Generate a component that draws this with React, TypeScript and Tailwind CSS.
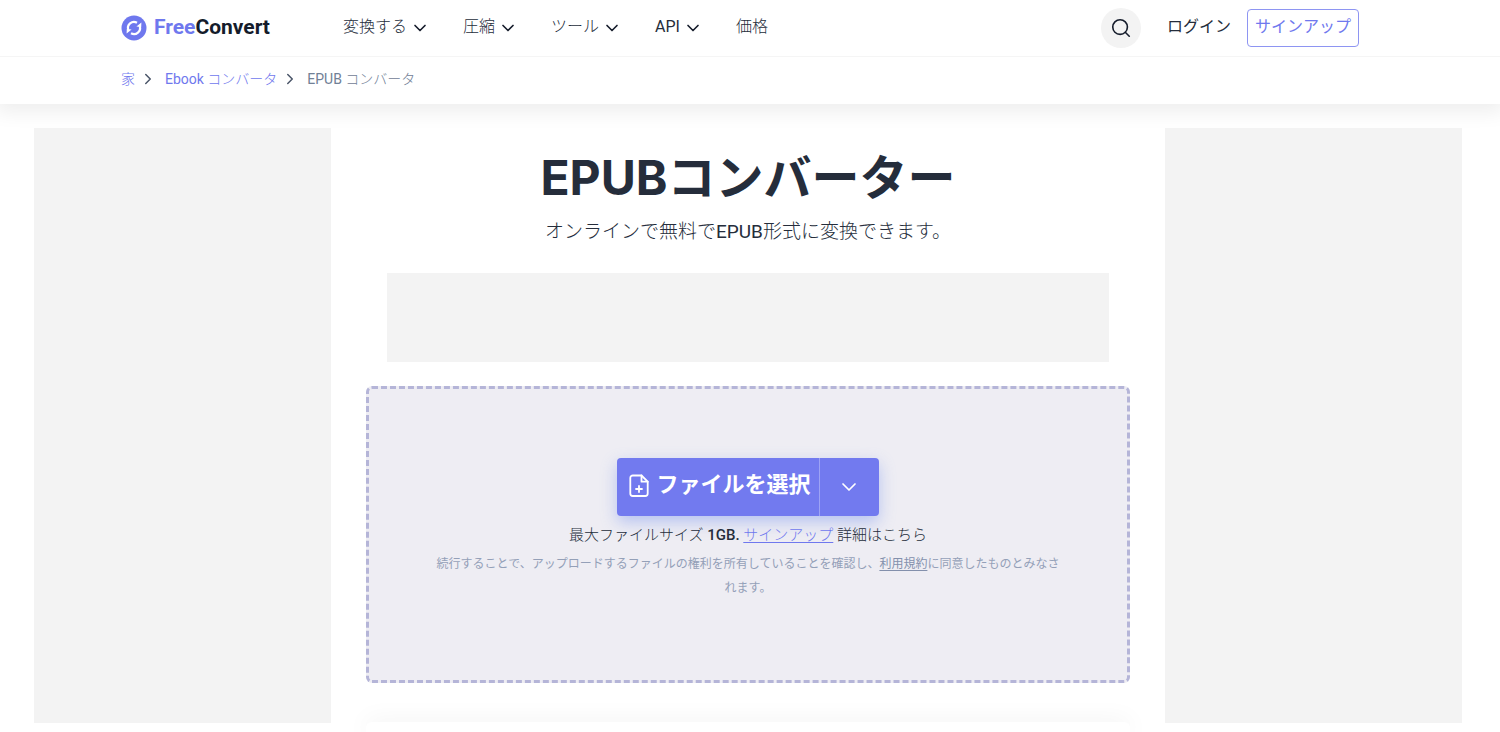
import { ChevronDown, ChevronRight, Search } from 'lucide-react';

const navItems = [
  { label: '変換する', menu: true },
  { label: '圧縮', menu: true },
  { label: 'ツール', menu: true },
  { label: 'API', menu: true },
  { label: '価格', menu: false },
];

function Logo() {
  return (
    <a href="#" className="flex items-center gap-[7px] text-[21px] font-bold text-[#151c2b]">
      <svg viewBox="0 0 26 26" className="h-[26px] w-[26px]" fill="none" aria-hidden="true">
        <circle cx="13" cy="13" r="12.5" fill="#6f78ee" />
        <g stroke="#fff" strokeWidth="2.2">
          <path d="M7.4 15.2a6 6 0 0 1 8.6-7.4" />
          <path d="M18.6 10.8a6 6 0 0 1-8.6 7.4" />
        </g>
        <path d="M15.4 11.4l4.8.6.2-4.6zM10.6 14.6l-4.8-.6-.2 4.6z" fill="#fff" />
      </svg>
      <span>
        <span className="text-[#6f78ee]">Free</span>Convert
      </span>
    </a>
  );
}

function Header() {
  return (
    <header className="relative flex h-[57px] items-center border-b border-[#f5f5f5] bg-white pr-[141px] pl-[121px]">
      <Logo />
      <nav className="ml-[73px] flex items-center gap-[33px] pb-0.5 text-base">
        {navItems.map((item) =>
          item.menu ? (
            <button key={item.label} type="button" className="flex items-center gap-[3px]">
              <span className={item.label === 'API' ? '' : 'font-light'}>{item.label}</span>
              <ChevronDown className="mt-0.5 h-5 w-5 text-[#151c2b]" />
            </button>
          ) : (
            <a key={item.label} href="#" className="font-light">
              {item.label}
            </a>
          ),
        )}
      </nav>
      <div className="ml-auto flex items-center">
        <button
          type="button"
          aria-label="検索"
          className="flex h-10 w-10 items-center justify-center rounded-full bg-[#f3f3f3]"
        >
          <Search className="h-[22px] w-[22px] text-[#151c2b]" strokeWidth={1.75} />
        </button>
        <a href="#" className="ml-[26px] pb-0.5 text-base">
          ログイン
        </a>
        <a
          href="#"
          className="ml-4 flex h-[38px] items-center rounded border border-[#8e95f2] px-[7px] pb-0.5 text-base text-[#6f78ee]"
        >
          サインアップ
        </a>
      </div>
    </header>
  );
}

function Breadcrumbs() {
  return (
    <nav className="flex h-[47px] items-center gap-1 pb-[3px] pl-[121px] text-sm font-light text-[#6f78ee] shadow-[0_4px_20px_4px_rgba(0,0,0,0.07)]">
      <a href="#">家</a>
      <ChevronRight className="mr-1 h-[18px] w-[18px] text-[#4a5568]" />
      <a href="#">
        <span className="font-normal">Ebook</span> コンバータ
      </a>
      <ChevronRight className="mr-1 h-[18px] w-[18px] text-[#4a5568]" />
      <span className="text-[#718096]">
        <span className="font-normal">EPUB</span> コンバータ
      </span>
    </nav>
  );
}

function FileIcon() {
  return (
    <svg
      viewBox="0 0 20 24"
      className="h-6 w-5"
      fill="none"
      stroke="currentColor"
      strokeWidth="1.8"
      strokeLinecap="round"
      strokeLinejoin="round"
      aria-hidden="true"
    >
      <path d="M12.5 1.5H3.8a2.5 2.5 0 0 0-2.5 2.5v15.5A2.5 2.5 0 0 0 3.8 22h12.4a2.5 2.5 0 0 0 2.5-2.5V7.7z" />
      <path d="M12.5 1.5v6.2h6.2M10 12v6M7 15h6" />
    </svg>
  );
}

function DropZone() {
  return (
    <section className="mt-6 flex flex-col items-center rounded-md border-[3px] border-dashed border-[#b5b5d8] bg-[#eeedf3] pt-[69px] pb-20">
      <div className="flex h-[58px] rounded bg-[#727aef] text-white shadow-[0_6px_16px_rgba(114,142,239,0.45)]">
        <button type="button" className="flex items-center gap-[7px] pr-2 pb-0.5 pl-3 text-[22px] font-bold">
          <FileIcon />
          <span className="pb-1">ファイルを選択</span>
        </button>
        <button
          type="button"
          aria-label="その他の選択元"
          className="flex w-[60px] items-center justify-center border-l border-[#9da3f5]"
        >
          <ChevronDown className="h-6 w-6" strokeWidth={1.75} />
        </button>
      </div>
      <p className="mt-[7px] text-[15px] leading-6 font-light">
        最大ファイルサイズ <span className="font-medium">1GB.</span>{' '}
        <a href="#" className="text-[#6f78ee] underline underline-offset-2">
          サインアップ
        </a>{' '}
        詳細はこちら
      </p>
      <p className="mt-[5px] max-w-[630px] text-center text-xs leading-6 text-[#94a0b8]">
        続行することで、アップロードするファイルの権利を所有していることを確認し、
        <a href="#" className="text-[#8390ac] underline underline-offset-2">
          利用規約
        </a>
        に同意したものとみなされます。
      </p>
    </section>
  );
}

export default function App() {
  return (
    <div
      className="flex min-h-screen flex-col overflow-hidden bg-white font-['Roboto','Noto_Sans_CJK_JP',sans-serif] text-[#252d3b]"
      lang="ja"
    >
      <Header />
      <Breadcrumbs />
      <main className="flex flex-1 gap-[35px] pt-6 pr-[38px] pl-[34px]">
        <aside className="h-[595px] w-[297px] shrink-0 bg-[#f3f3f3]" />
        <div className="flex min-w-0 flex-1 flex-col">
          <h1 className="mt-6 text-center font-['Inter','Noto_Sans_CJK_JP',sans-serif] text-5xl leading-[52px] font-bold">
            EPUBコンバーター
          </h1>
          <p className="mt-[13px] text-center text-[19px] leading-[30px] font-light">
            オンラインで無料で<span className="font-normal">EPUB</span>形式に変換できます。
          </p>
          <div className="mx-[21px] mt-[26px] h-[89px] bg-[#f3f3f3]" />
          <DropZone />
          <section className="mt-[39px] min-h-2 flex-1 rounded-t-md shadow-[0_0_24px_rgba(0,0,0,0.08)]" />
        </div>
        <aside className="h-[595px] w-[297px] shrink-0 bg-[#f3f3f3]" />
      </main>
    </div>
  );
}
